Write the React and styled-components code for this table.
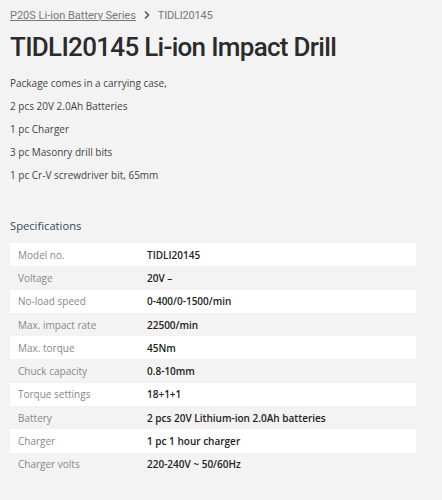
import React from "react";
import styled, { createGlobalStyle } from "styled-components";

const GlobalStyle = createGlobalStyle`
  html, body {
    margin: 0;
    padding: 0;
    background: #f3f3f3;
  }
  body {
    font-family: "Open Sans", "Liberation Sans", sans-serif;
  }
`;

const specs = [
  ["Model no.", "TIDLI20145"],
  ["Voltage", "20V –"],
  ["No-load speed", "0-400/0-1500/min"],
  ["Max. impact rate", "22500/min"],
  ["Max. torque", "45Nm"],
  ["Chuck capacity", "0.8-10mm"],
  ["Torque settings", "18+1+1"],
  ["Battery", "2 pcs 20V Lithium-ion 2.0Ah batteries"],
  ["Charger", "1 pc 1 hour charger"],
  ["Charger volts", "220-240V ~ 50/60Hz"],
];

const contents = [
  "Package comes in a carrying case,",
  "2 pcs 20V 2.0Ah Batteries",
  "1 pc Charger",
  "3 pc Masonry drill bits",
  "1 pc Cr-V screwdriver bit, 65mm",
];

const App = () => {
  return (
    <>
      <GlobalStyle />
      <Page>
        <Breadcrumb>
          <CrumbLink href="#">P20S Li-ion Battery Series</CrumbLink>
          <Chevron viewBox="0 0 6 10">
            <path d="M1 1.5 L4.5 5 L1 8.5" fill="none" stroke="#555" strokeWidth="1.6" />
          </Chevron>
          <CrumbCurrent>TIDLI20145</CrumbCurrent>
        </Breadcrumb>
        <Title>TIDLI20145 Li-ion Impact Drill</Title>
        <Contents>
          {contents.map((line) => (
            <p key={line}>{line}</p>
          ))}
        </Contents>
        <SectionTitle>Specifications</SectionTitle>
        <SpecTable>
          {specs.map(([label, value], i) => (
            <SpecRow key={label} $odd={i % 2 === 1}>
              <Label>{label}</Label>
              <Value>{value}</Value>
            </SpecRow>
          ))}
        </SpecTable>
      </Page>
    </>
  );
};

export default App;

const Page = styled.div`
  padding: 8px 26px 20px 10px;
`;

const Breadcrumb = styled.div`
  display: flex;
  align-items: center;
  font-family: "Roboto", sans-serif;
  font-size: 11px;
  color: #777;
  height: 14px;
`;

const CrumbLink = styled.a`
  color: #777;
  text-decoration: underline;
`;

const Chevron = styled.svg`
  width: 6px;
  height: 10px;
  margin: 0 8px 0 8px;
`;

const CrumbCurrent = styled.span`
  color: #777;
  letter-spacing: -0.2px;
`;

const Title = styled.h1`
  margin: 9px 0 0;
  font-family: "Roboto", sans-serif;
  font-weight: 500;
  font-size: 26px;
  letter-spacing: -0.7px;
  line-height: 32px;
  color: #2b2b2b;
`;

const Contents = styled.div`
  margin-top: 9px;
  font-size: 10px;
  color: #444;
  p {
    margin: 0;
    line-height: 23px;
  }
`;

const SectionTitle = styled.h2`
  margin: 30px 0 0;
  font-size: 11.2px;
  font-weight: 400;
  color: #34495a;
  line-height: 18px;
`;

const SpecTable = styled.div`
  margin-top: 8px;
  display: flex;
  flex-direction: column;
`;

const SpecRow = styled.div`
  display: grid;
  grid-template-columns: 129px 1fr;
  align-items: center;
  height: 23.3px;
  padding: 0 8px;
  background: ${(p) => (p.$odd ? "transparent" : "#fff")};
  font-size: 10px;
`;

const Label = styled.div`
  color: #888;
`;

const Value = styled.div`
  color: #222;
  font-weight: 600;
`;
